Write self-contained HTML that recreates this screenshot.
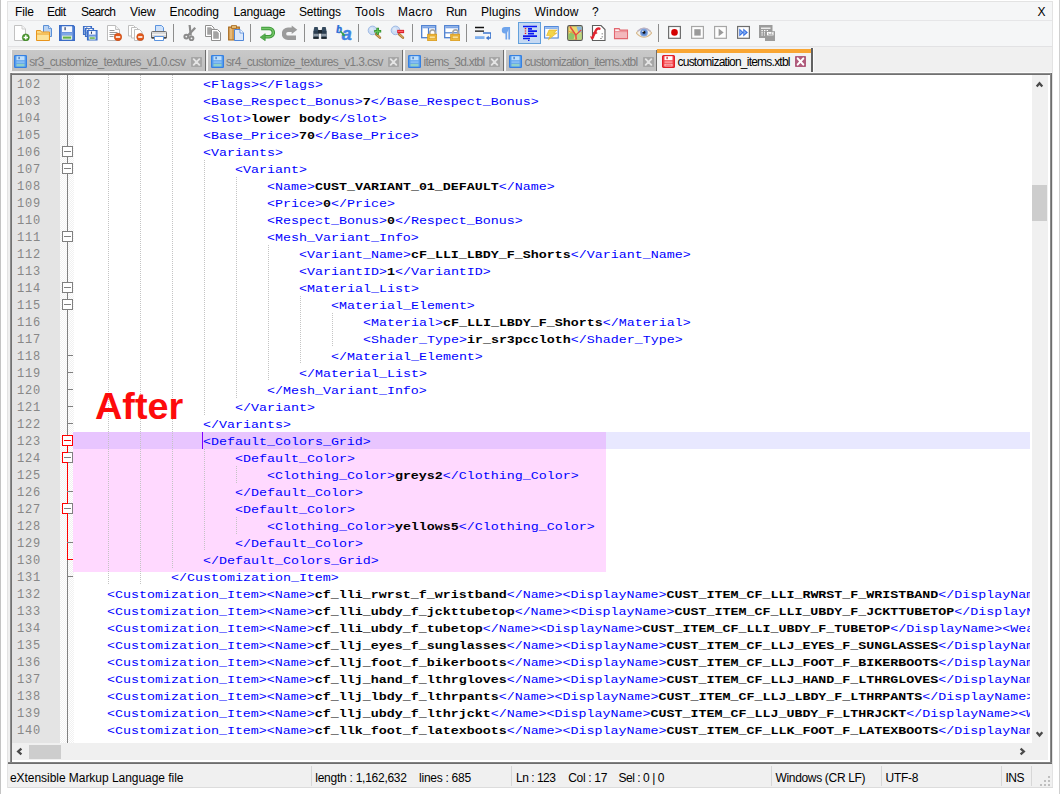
<!DOCTYPE html>
<html lang="en">
<head>
<meta charset="utf-8">
<title>customization_items.xtbl - Notepad++</title>
<style>
*{box-sizing:border-box;margin:0;padding:0}
html,body{width:1060px;height:794px;overflow:hidden;background:#fff}
body{position:relative;font-family:"Liberation Sans",sans-serif;font-size:12px;color:#000}
.abs,.n,.l,.g,.fb,.ft,.mi,.ic,.sep,.tab,.st,.sd{position:absolute}
/* window frame */
#edgeL{left:0;top:0;width:1px;height:794px;background:#c4c4c4}
#edgeR{left:1059px;top:0;width:1px;height:794px;background:#cfcfcf}
#win{left:7px;top:1px;width:1046px;height:787px;background:#f0f0f0;border:1px solid #e3e3e3}
#menubar{left:8px;top:2px;width:1044px;height:18px;background:#f5f6f7}
#menuline{left:8px;top:20px;width:1044px;height:1px;background:#e6e6e8}
#toolbar{left:8px;top:21px;width:1044px;height:25px;background:#f5f6f7}
#toolline{left:8px;top:46px;width:1044px;height:1px;background:#e2e2e4}
.mi{top:5px;height:15px;line-height:15px;font-size:12px;white-space:nowrap;color:#000}
.sep{top:24px;width:1px;height:18px;background:#8d8d8d}
.ic{top:25px;width:16px;height:16px}
/* tabs */
.tab{top:50px;height:21px;background:linear-gradient(#c9c9c9,#bebebe);border-right:1px solid #6e6e6e;box-shadow:-1px -1px 0 #f8f8f8}
.tab .tx{position:absolute;top:4.8px;height:14px;line-height:14px;font-size:12px;letter-spacing:-0.55px;color:#7e7e7e;white-space:nowrap}
.tab .fi{position:absolute;top:5px;width:13px;height:13px}
.tab .cl{position:absolute;top:7px;width:11px;height:10px}
.tab.act{top:48px;height:24px;background:#f2f2f2;border-right:2px solid #626262;box-shadow:1px 0 0 #fcfcfc}
.tab.act .tx{color:#000;top:6.8px}
.tab.act .fi{top:7px}
.tab.act .cl{top:8px;height:11px}
/* editor */
#edHi{left:10px;top:72px;width:1042px;height:1px;background:#fbfbfb}
#edTop{left:10px;top:73px;width:1042px;height:2px;background:linear-gradient(#9a9a9a,#636363)}
#edLeft{left:10px;top:73px;width:2px;height:690px;background:linear-gradient(90deg,#9a9a9a,#636363)}
#edRight{left:1050px;top:73px;width:2px;height:691px;background:linear-gradient(90deg,#9a9a9a,#5e5e5e)}
#edBot{left:8px;top:762px;width:1044px;height:2px;background:linear-gradient(#8a8a8a,#636363)}
#edBg{left:12px;top:75px;width:1038px;height:687px;background:#fff}
#lnm{left:12px;top:75px;width:48px;height:668px;background:#e4e4e4}
#fdm{left:60px;top:75px;width:14px;height:668px;background:repeating-conic-gradient(#fff 0 25%,#f1f1f1 0 50%) 0 0/2px 2px}
#fline{left:67px;top:75px;width:1px;height:668px;background:#808080}
#clip{left:12px;top:75px;width:1018px;height:668px;overflow:hidden}
#clip>div{position:absolute;left:-12px;top:-75px;width:1060px;height:794px}
.n{left:17px;width:26px;height:17px;line-height:17px;padding-top:2px;font-family:"Liberation Mono",monospace;font-size:12px;letter-spacing:0.8px;color:#878787;white-space:pre}
.l{height:17px;line-height:17px;padding-top:2px;margin-left:-0.6px;font-family:"Liberation Mono",monospace;font-size:11.2px;transform:scaleX(1.1905);transform-origin:0 0;color:#0000ff;white-space:pre}
.l b{color:#000;font-weight:bold}
.g{width:1px;background:repeating-linear-gradient(#c4c4c4 0 1px,transparent 1px 2px)}
.fb{left:62px;width:11px;height:11px;border:1px solid #808080;background:#fff}
.fb i{position:absolute;left:1px;top:4px;width:7px;height:1px;background:#808080}
.fb.r{border-color:#ff0000}.fb.r i{background:#ff0000}
.fb.h::before{content:"";box-sizing:border-box;position:absolute;left:-1px;top:-1px;width:6px;height:11px;border:1px solid #ff0000;border-right:0}
.ft{left:67px;width:6px;height:1px;background:#808080}
.ft.r{background:#ff0000}
#fline2{left:67px;top:446px;width:1px;height:114px;background:#ff0000}
#curline{left:74px;top:432px;width:956px;height:17px;background:#e8e8ff}
#pink{left:73px;top:432px;width:533px;height:140px;background:#ffd9ff}
#pink2{left:73px;top:432px;width:533px;height:17px;background:#e8c5ff}
#after{left:95px;top:385px;height:42px;line-height:42px;font-size:37.8px;font-weight:bold;color:#fd0b0b;white-space:nowrap;letter-spacing:0}
#caret{left:202px;top:432px;width:1px;height:17px;background:#8000ff}
/* scrollbars */
#vs{left:1032px;top:75px;width:16px;height:668px;background:#f0f0f0}
#vth{left:1032px;top:185px;width:15px;height:36px;background:#cdcdcd}
#hs{left:12px;top:743px;width:1036px;height:17px;background:#f0f0f0}
#hth{left:29px;top:745px;width:32px;height:14px;background:#cdcdcd}
#corner{left:1030px;top:743px;width:18px;height:17px;background:#f0f0f0}
/* status */
#status{left:8px;top:764px;width:1044px;height:23px;background:#f0f0f0}
#statline{left:8px;top:787px;width:1045px;height:1px;background:#dcdcdc}
.st{top:770px;height:16px;line-height:16px;font-size:12px;white-space:nowrap;color:#000}
.sd{top:766px;width:1px;height:20px;background:#d7d7d7}
</style>
</head>
<body>

<div class="abs" id="edgeL"></div><div class="abs" id="edgeR"></div>
<div class="abs" id="win"></div>
<div class="abs" id="menubar"></div><div class="abs" id="menuline"></div><div class="abs" id="toolbar"></div><div class="abs" id="toolline"></div>
<!-- menu -->
<div class="mi" style="left:15.0px;letter-spacing:-0.11px">File</div>
<div class="mi" style="left:47.0px;letter-spacing:-0.56px">Edit</div>
<div class="mi" style="left:81.0px;letter-spacing:-0.61px">Search</div>
<div class="mi" style="left:130.0px;letter-spacing:-0.1px">View</div>
<div class="mi" style="left:169.5px;letter-spacing:-0.08px">Encoding</div>
<div class="mi" style="left:233.5px;letter-spacing:-0.2px">Language</div>
<div class="mi" style="left:299.0px;letter-spacing:-0.19px">Settings</div>
<div class="mi" style="left:355.0px;letter-spacing:0.37px">Tools</div>
<div class="mi" style="left:398.0px;letter-spacing:0.29px">Macro</div>
<div class="mi" style="left:446.0px;letter-spacing:-0.51px">Run</div>
<div class="mi" style="left:481.0px;letter-spacing:0.02px">Plugins</div>
<div class="mi" style="left:534.5px;letter-spacing:0.26px">Window</div>
<div class="mi" style="left:592.0px;letter-spacing:0px">?</div>
<div class="mi" style="left:1037.5px;letter-spacing:0px">X</div>
<!-- toolbar -->
<div class="abs" style="left:518px;top:22px;width:23px;height:22px;background:#c5d9f3;border:1px solid #62a0dc"></div>
<svg class="ic" style="left:14px" viewBox="0 0 16 16" aria-label="new"><path d="M.5 .5h7.500l3.500 3.500v11.500h-11z" fill="#fff" stroke="#c2c2c2"/><path d="M8 .5v3.500h3.500" fill="#f4f4f4" stroke="#cdcdcd"/><circle cx="11.800" cy="12.400" r="3.500" fill="#4c9a2f" stroke="#3a7d22" stroke-width=".6"/><path d="M11.800 10.200v4.400M9.600 12.400h4.400" stroke="#fff" stroke-width="1.500"/></svg>
<svg class="ic" style="left:36px" viewBox="0 0 16 16" aria-label="open"><path d="M7.5 .5h5l3 3v8h-8z" fill="#b9d3f3" stroke="#5a8fd6"/><path d="M12.5 .5v3h3" fill="#dce9f9" stroke="#5a8fd6" stroke-width=".8"/><path d="M.5 5.5h4l1 1.5h8v8.5h-13z" fill="#fbd980" stroke="#e8941c"/><path d="M1 9h12" stroke="#f0a838" stroke-width="1"/><path d="M1.5 10h11v5h-11z" fill="#fce39b"/></svg>
<svg class="ic" style="left:59px" viewBox="0 0 16 16" aria-label="save"><path d="M.8 .8h13.4l1 1v13.400h-14.400z" fill="#6c95de" stroke="#3a6cc6" stroke-width="1.600"/><rect x="3" y="1.3" width="10" height="5.7" fill="#f7f9fd"/><rect x="5.5" y="2.2" width="1.2" height="3" fill="#2b3d66"/><rect x="3" y="8" width="10" height="2" fill="#7fa7e6"/><rect x="3" y="10.5" width="10" height="4.2" fill="#dfeeda"/><rect x="4" y="11.6" width="8" height="2" fill="#63b246"/></svg>
<svg class="ic" style="left:82px" viewBox="0 0 16 16" aria-label="saveall"><g transform="translate(1,1) scale(0.5625)"><path d="M.8 .8h14.4v14.4h-14.4z" fill="#6c95de" stroke="#3a6cc6" stroke-width="1.800"/><rect x="3" y="1.6" width="10" height="5.4" fill="#f7f9fd"/><rect x="6" y="2.4" width="1.6" height="3.4" fill="#2b3d66"/><rect x="3" y="10" width="10" height="4.6" fill="#dfeeda"/><rect x="4.2" y="11.2" width="7.6" height="2.2" fill="#63b246"/></g><g transform="translate(3,3) scale(0.5625)"><path d="M.8 .8h14.4v14.4h-14.4z" fill="#6c95de" stroke="#3a6cc6" stroke-width="1.800"/><rect x="3" y="1.6" width="10" height="5.4" fill="#f7f9fd"/><rect x="6" y="2.4" width="1.6" height="3.4" fill="#2b3d66"/><rect x="3" y="10" width="10" height="4.6" fill="#dfeeda"/><rect x="4.2" y="11.2" width="7.6" height="2.2" fill="#63b246"/></g><g transform="translate(5,5) scale(0.65625)"><path d="M.8 .8h14.4v14.4h-14.4z" fill="#6c95de" stroke="#3a6cc6" stroke-width="1.800"/><rect x="3" y="1.6" width="10" height="5.4" fill="#f7f9fd"/><rect x="6" y="2.4" width="1.6" height="3.4" fill="#2b3d66"/><rect x="3" y="10" width="10" height="4.6" fill="#dfeeda"/><rect x="4.2" y="11.2" width="7.6" height="2.2" fill="#63b246"/></g></svg>
<svg class="ic" style="left:106px" viewBox="0 0 16 16" aria-label="close"><path d="M1.5 .5h8l4 4v11h-12z" fill="#fff" stroke="#bcbcbc"/><path d="M9.5 .5v4h4" fill="#f0f0f0" stroke="#c4c4c4"/><path d="M3.5 5.5h5M3.5 7.5h8M3.5 9.5h6M3.5 11.5h4" stroke="#8f8f8f" stroke-width=".9"/><circle cx="12" cy="12" r="3.7" fill="#e2591c" stroke="#c2440f" stroke-width=".6"/><path d="M9.8 12h4.4" stroke="#fff" stroke-width="1.6"/></svg>
<svg class="ic" style="left:128px" viewBox="0 0 16 16" aria-label="closeall"><path d="M.5 .5h5l2.5 2.5v8h-7.5z" fill="#fff" stroke="#bfbfbf"/><path d="M3.5 2.5h5l2.500 2.500v8h-7.500z" fill="#fff" stroke="#bfbfbf"/><path d="M6.500 4.500h5l2.500 2.500v8.500h-7.500z" fill="#fff" stroke="#bfbfbf"/><circle cx="12.300" cy="12" r="3.600" fill="#e2591c" stroke="#c2440f" stroke-width=".6"/><path d="M10.200 12h4.200" stroke="#fff" stroke-width="1.600"/></svg>
<svg class="ic" style="left:151px" viewBox="0 0 16 16" aria-label="print"><path d="M4.500 .5h6l2 2v5h-8z" fill="#cfe2fa" stroke="#5b93de"/><path d="M1.500 6.500h13q1 0 1 1v5.500h-15v-5.500q0-1 1-1z" fill="#d8d8d8" stroke="#707070"/><path d="M1 9.500h14" stroke="#f4f4f4" stroke-width="1.200"/><path d="M.8 12.800h14.400" stroke="#3c3c3c" stroke-width="1.400"/><path d="M3.500 11.500h9v4h-9z" fill="#fff" stroke="#5b93de"/></svg>
<div class="sep" style="left:173px"></div>
<svg class="ic" style="left:182px" viewBox="0 0 16 16" aria-label="cut"><path d="M7.600 0l1.200 10.500" stroke="#8c8c8c" stroke-width="2.200" fill="none"/><path d="M13.200 2.800L5.500 11" stroke="#8c8c8c" stroke-width="2.300" fill="none"/><circle cx="4.300" cy="11.600" r="1.900" fill="none" stroke="#8c8c8c" stroke-width="2"/><circle cx="9.500" cy="13.300" r="1.900" fill="none" stroke="#8c8c8c" stroke-width="2"/></svg>
<svg class="ic" style="left:205px" viewBox="0 0 16 16" aria-label="copy"><path d="M.5 .5h6l2.500 2.500v8.500h-8.500z" fill="#fff" stroke="#8f8f8f"/><path d="M2.200 2.200h3.600l1.500 1.500v6.100h-5.100z" fill="#a3a3a3"/><path d="M6.500 4.500h6l3 3v8h-9z" fill="#fff" stroke="#8f8f8f"/><path d="M8.200 6.200h3.800l1.800 1.800v5.800h-5.600z" fill="#a3a3a3"/></svg>
<svg class="ic" style="left:228px" viewBox="0 0 16 16" aria-label="paste"><path d="M.7 2h10.600v13h-10.600z" fill="#d39a4e" stroke="#a86a20" stroke-width="1.200"/><path d="M1.600 3h2.600v11.200h-2.600z" fill="#e6b877"/><path d="M3.500 .6h5v2.800h-5z" fill="#e9c27a" stroke="#a86a20" stroke-width=".9"/><path d="M6.500 4.500h5.500l3.500 3.500v7.500h-9z" fill="#dbe8fb" stroke="#4f86d8"/><path d="M12 4.500v3.500h3.500" fill="#fff" stroke="#4f86d8" stroke-width=".8"/></svg>
<div class="sep" style="left:250px"></div>
<svg class="ic" style="left:259px" viewBox="0 0 16 16" aria-label="undo"><path d="M2.200 3.500h8a4.150 4.150 0 0 1 0 8.300H6" fill="none" stroke="#3f9a3b" stroke-width="3.400"/><path d="M2.600 3.500h7.600a4.150 4.150 0 0 1 0 8.300H6" fill="none" stroke="#74c568" stroke-width="1.500"/><path d="M1.200 12.200l5-3.500v7z" fill="#55ae4c" stroke="#3f9a3b" stroke-width=".7"/></svg>
<svg class="ic" style="left:282px" viewBox="0 0 16 16" aria-label="redo"><path d="M14 12.800H6a4.050 4.050 0 0 1 0-8.100H10.500" fill="none" stroke="#9b9b9b" stroke-width="4.400"/><path d="M15.300 4.800l-5.600-4.300v8.600z" fill="#9b9b9b"/></svg>
<div class="sep" style="left:304px"></div>
<svg class="ic" style="left:312px" viewBox="0 0 16 16" aria-label="find"><path d="M1.300 6h5.400v7.400h-5.400z" fill="#2c3e50"/><path d="M9.300 6h5.400v7.400h-5.400z" fill="#2c3e50"/><path d="M2.300 2h3.400l.8 4h-5z" fill="#34495e"/><path d="M10.300 2h3.400l.8 4h-5z" fill="#34495e"/><rect x="6" y="5" width="4" height="3.600" fill="#1e2833"/><rect x="1.300" y="8.800" width="5.400" height="2.600" fill="#8f9aa5"/><rect x="9.300" y="8.800" width="5.400" height="2.600" fill="#8f9aa5"/><rect x="1.300" y="12.400" width="5.400" height="1.400" fill="#10161c"/><rect x="9.300" y="12.400" width="5.400" height="1.400" fill="#10161c"/></svg>
<svg class="ic" style="left:336px" viewBox="0 0 16 16" aria-label="replace"><text x=".2" y="7.600" font-family="Liberation Serif,serif" font-weight="bold" font-style="italic" font-size="11.500" fill="#2d6fd6" stroke="#2d6fd6" stroke-width=".4">b</text><text x="5.800" y="15.300" font-family="Liberation Sans,sans-serif" font-weight="bold" font-style="italic" font-size="18" fill="#3f84e4" stroke="#3f84e4" stroke-width=".5">a</text><path d="M4.500 6.200l3 3.300" stroke="#35a04a" stroke-width="1.500"/><path d="M9 11.200l-3.700-1 2.700-2.400z" fill="#35a04a"/></svg>
<div class="sep" style="left:358px"></div>
<svg class="ic" style="left:367px" viewBox="0 0 16 16" aria-label="zoomin"><circle cx="5.500" cy="5.400" r="4.300" fill="#cbdcf4" stroke="#9db9e5" stroke-width="1"/><circle cx="4.600" cy="4.400" r="1.800" fill="#dde8f8"/><path d="M9.200 9.200l3.700 3.400" stroke="#a8742e" stroke-width="2.600" stroke-linecap="round"/><path d="M9.500 9.400l3.300 3" stroke="#dba860" stroke-width="1.100" stroke-linecap="round"/><path d="M10.700 2.800v7M7.200 6.300h7" stroke="#2f8f2c" stroke-width="2.600"/><path d="M10.700 3.600v5.400M8 6.300h5.400" stroke="#62c254" stroke-width="1.200"/></svg>
<svg class="ic" style="left:390px" viewBox="0 0 16 16" aria-label="zoomout"><circle cx="5.500" cy="5.400" r="4.300" fill="#cbdcf4" stroke="#9db9e5" stroke-width="1"/><circle cx="4.600" cy="4.400" r="1.800" fill="#dde8f8"/><path d="M9.200 9.200l3.700 3.400" stroke="#a8742e" stroke-width="2.600" stroke-linecap="round"/><path d="M9.500 9.400l3.300 3" stroke="#dba860" stroke-width="1.100" stroke-linecap="round"/><path d="M7.200 6.500h6.900" stroke="#dc1f2b" stroke-width="3.300"/><path d="M8 6.400h5.300" stroke="#ff6a6e" stroke-width="1.100"/></svg>
<div class="sep" style="left:412px"></div>
<svg class="ic" style="left:421px" viewBox="0 0 16 16" aria-label="syncv"><rect x=".7" y=".7" width="14" height="12" fill="#fff" stroke="#4c7fd0" stroke-width="1.300"/><rect x="1.300" y="1.300" width="12.800" height="2" fill="#7ea6e6"/><path d="M7.500 3v10" stroke="#4c7fd0" stroke-width="1.200"/><path d="M8.800 9.500v-2a2.700 2.700 0 0 1 5.400 0v2" fill="none" stroke="#a7a7a7" stroke-width="1.700"/><rect x="6.700" y="9.300" width="9" height="6.400" fill="#f0bc3e" stroke="#d99a1c" stroke-width=".9"/><rect x="8.200" y="11" width="6" height="2.700" fill="#fbe29a" stroke="#d99a1c" stroke-width=".6"/></svg>
<svg class="ic" style="left:444px" viewBox="0 0 16 16" aria-label="synch"><rect x=".7" y=".7" width="14" height="12" fill="#fff" stroke="#4c7fd0" stroke-width="1.300"/><rect x="1.300" y="1.300" width="12.800" height="2" fill="#7ea6e6"/><path d="M1 7.800h13.500" stroke="#4c7fd0" stroke-width="1.200"/><path d="M8.800 9.500v-2a2.700 2.700 0 0 1 5.400 0v2" fill="none" stroke="#a7a7a7" stroke-width="1.700"/><rect x="6.700" y="9.300" width="9" height="6.400" fill="#f0bc3e" stroke="#d99a1c" stroke-width=".9"/><rect x="8.200" y="11" width="6" height="2.700" fill="#fbe29a" stroke="#d99a1c" stroke-width=".6"/></svg>
<div class="sep" style="left:466px"></div>
<svg class="ic" style="left:475px" viewBox="0 0 16 16" aria-label="wrap"><path d="M0 2.500h9M0 6.200h9" stroke="#111" stroke-width="1.300"/><path d="M8 8h7.800v5H12" fill="none" stroke="#3f78cf" stroke-width="1.300"/><path d="M10.800 13l3-2.300v4.600z" fill="#3f78cf"/><rect x="0" y="11.200" width="9.500" height="2.800" fill="#7fb0ee"/></svg>
<svg class="ic" style="left:497px" viewBox="0 0 16 16" aria-label="pilcrow"><path d="M9.300 2v12.500M12.200 2v12.500" stroke="#6ea4ec" stroke-width="1.700"/><path d="M13 2H8a3.200 3.200 0 0 0 0 6.400h1.600z" fill="#6ea4ec"/></svg>
<svg class="ic" style="left:523px" viewBox="0 0 16 16" aria-label="indent"><path d="M0 1.500h14M5 3.800h4M5 6.200h9M5 8.700h6M0 11.200h14M0 13.500h7" stroke="#0b17f0" stroke-width="1.700"/><path d="M2.500 3v7.500" stroke="#f01818" stroke-width="1.400" stroke-dasharray="1.200 1.200"/><path d="M5 15.300h1.500" stroke="#0b17f0" stroke-width="1.200"/></svg>
<svg class="ic" style="left:544px" viewBox="0 0 16 16" aria-label="udl"><rect x=".6" y="1.600" width="13.600" height="11.400" fill="#fff" stroke="#4c84d8" stroke-width="1.100"/><rect x="1.200" y="2.200" width="12.400" height="1.800" fill="#8bb4ee"/><path d="M5 5h8l-3.200 3h3L4.500 14.600l1.800-4H2.600z" fill="#f3d548" stroke="#e3b32a" stroke-width=".7"/></svg>
<svg class="ic" style="left:567px" viewBox="0 0 16 16" aria-label="map"><rect x=".7" y=".7" width="14.600" height="14.600" rx="1.600" fill="#ead96e" stroke="#555" stroke-width="1.200"/><path d="M1.400 9.500l3.600-3.500 3 3.500-1.500 5.100h-5.100z" fill="#8fc46a"/><path d="M9.500 1.400h5.100v5.600l-3.100 1z" fill="#86b7e0"/><path d="M9.500 10l5.100-1.800v6.400h-5.600z" fill="#b5d886"/><path d="M3 1.500l5.800 8.500.4 4.600" fill="none" stroke="#e24a40" stroke-width="1.500"/><path d="M8.800 10l5.400-5" stroke="#e24a40" stroke-width="1.100"/><path d="M1.400 6l5.400 2.600" stroke="#f0a03a" stroke-width="1"/></svg>
<svg class="ic" style="left:590px" viewBox="0 0 16 16" aria-label="func"><path d="M2.500 .5h8.500l4 4v11h-12.500z" fill="#fff" stroke="#5e5e5e" stroke-width="1.100"/><path d="M12.200 8v5.500h-3" fill="none" stroke="#8a8a8a" stroke-width="1" stroke-dasharray="1.500 1.500"/><path d="M9.400 3.700q-2.300-.9-3.400 1.600L2.600 12.600" fill="none" stroke="#e02430" stroke-width="2.400" stroke-linecap="round"/><path d="M3 8h4.200" stroke="#e02430" stroke-width="1.500"/><path d="M-.2 11.200l2 3.600 2.600-2.400z" fill="#e02430"/></svg>
<svg class="ic" style="left:613px" viewBox="0 0 16 16" aria-label="folder"><path d="M1.500 3.600h4.600l1 1.500h7.400v8.500h-13z" fill="#f8d3d5" stroke="#e2666f" stroke-width="1.100"/><path d="M2 6.800h12" stroke="#e2666f" stroke-width=".8"/><path d="M2.100 7.300h11.800v5.700h-11.800z" fill="#f2aeb3" opacity=".75"/><path d="M2.600 5.300h3" stroke="#fff" stroke-width=".9"/></svg>
<svg class="ic" style="left:636px" viewBox="0 0 16 16" aria-label="eye"><path d="M.3 8q7.700-9.500 15.400 0q-7.700 8.600-15.400 0z" fill="#f4f1ea" stroke="#d8b98c" stroke-width="1.100"/><path d="M1.500 6.300q6.500-6 13 0" fill="none" stroke="#b9b3c9" stroke-width="1.300"/><circle cx="8" cy="7.600" r="3.900" fill="#7ea3de"/><circle cx="8" cy="7.600" r="2.700" fill="#5b86cf"/><circle cx="8" cy="7.400" r="1.400" fill="#111"/><circle cx="6.900" cy="6.300" r=".8" fill="#fff"/></svg>
<div class="sep" style="left:658px"></div>
<svg class="ic" style="left:668px" viewBox="0 0 16 16" aria-label="rec"><rect x=".6" y="1.500" width="11.800" height="11.800" fill="#fdfdfd" stroke="#6e6e6e" stroke-width="1.200"/><circle cx="6.500" cy="7.400" r="3.300" fill="#d40000"/></svg>
<svg class="ic" style="left:691px" viewBox="0 0 16 16" aria-label="stop"><rect x=".6" y="1.500" width="11.800" height="11.800" fill="#fdfdfd" stroke="#a6a6a6" stroke-width="1.200"/><rect x="3.300" y="4.200" width="6.400" height="6.400" fill="#9a9a9a"/></svg>
<svg class="ic" style="left:714px" viewBox="0 0 16 16" aria-label="play"><rect x=".6" y="1.500" width="11.800" height="11.800" fill="#fdfdfd" stroke="#a6a6a6" stroke-width="1.200"/><path d="M4.600 3.500v7.800l5-3.900z" fill="#9a9a9a"/></svg>
<svg class="ic" style="left:737px" viewBox="0 0 16 16" aria-label="playm"><rect x=".6" y="1.500" width="11.800" height="11.800" fill="#fdfdfd" stroke="#6e6e6e" stroke-width="1.200"/><path d="M2.300 3.400v8l4.400-4z" fill="#2f6ae0"/><path d="M6.300 3.400v8l4.600-4z" fill="#2f6ae0"/><path d="M3 5.200v4.400l2.300-2.200zM7 5.200v4.400l2.400-2.200z" fill="#7eaaf0"/></svg>
<svg class="ic" style="left:759px" viewBox="0 0 16 16" aria-label="savem"><rect x="0" y="0" width="13.500" height="13" fill="#9c9c9c"/><path d="M2 3.200h9.500" stroke="#fff" stroke-width="1.200"/><path d="M2.400 5.600h1.400M5 5.600h1.400M2.400 7.800h1.400M5 7.800h1.400M2.400 10h1.400M5 10h1.400M7.600 5.600h1.400" stroke="#fff" stroke-width="1.200"/><rect x="6" y="6.200" width="10" height="9.800" fill="#9c9c9c"/><rect x="8" y="7" width="6.500" height="3.400" fill="#fff"/><path d="M9.800 7.800v1.800h2M13.600 7.800h-1.400v1.800h1.400" stroke="#9c9c9c" stroke-width=".8" fill="none"/></svg>
<!-- tabs -->
<div class="tab" style="left:12px;width:194px">
<svg class="fi" style="left:2px" viewBox="0 0 13 13"><rect x=".6" y=".6" width="11.800" height="11.800" rx=".6" fill="#5fa3ee" stroke="#3580e2" stroke-width="1.200"/><rect x="2.500" y="1.200" width="8" height="4" fill="#bfdffb"/><rect x="4.500" y="1.800" width="1.200" height="2.400" fill="#3c6fb8"/><rect x="2.500" y="6.300" width="8" height="1.600" fill="#8cc0f5"/><rect x="2.500" y="8.800" width="8" height="2.600" fill="#8fd0c8"/></svg>
<div class="tx" style="left:17.2px;letter-spacing:-0.69px">sr3_customize_textures_v1.0.csv</div>
<svg class="cl" style="left:179px" viewBox="0 0 11 10" preserveAspectRatio="none"><rect x="0" y="0" width="11" height="10" rx=".8" fill="#a6a6a6"/><path d="M2.700 2.200l5.600 5.600M8.300 2.200l-5.600 5.600" stroke="#e4e4e4" stroke-width="1.900" stroke-linecap="round"/></svg>
</div>
<div class="tab" style="left:208px;width:195px">
<svg class="fi" style="left:3px" viewBox="0 0 13 13"><rect x=".6" y=".6" width="11.800" height="11.800" rx=".6" fill="#5fa3ee" stroke="#3580e2" stroke-width="1.200"/><rect x="2.500" y="1.200" width="8" height="4" fill="#bfdffb"/><rect x="4.500" y="1.800" width="1.200" height="2.400" fill="#3c6fb8"/><rect x="2.500" y="6.300" width="8" height="1.600" fill="#8cc0f5"/><rect x="2.500" y="8.800" width="8" height="2.600" fill="#8fd0c8"/></svg>
<div class="tx" style="left:18.0px;letter-spacing:-0.66px">sr4_customize_textures_v1.3.csv</div>
<svg class="cl" style="left:180px" viewBox="0 0 11 10" preserveAspectRatio="none"><rect x="0" y="0" width="11" height="10" rx=".8" fill="#a6a6a6"/><path d="M2.700 2.200l5.600 5.600M8.300 2.200l-5.600 5.600" stroke="#e4e4e4" stroke-width="1.900" stroke-linecap="round"/></svg>
</div>
<div class="tab" style="left:405px;width:99px">
<svg class="fi" style="left:3px" viewBox="0 0 13 13"><rect x=".6" y=".6" width="11.800" height="11.800" rx=".6" fill="#5fa3ee" stroke="#3580e2" stroke-width="1.200"/><rect x="2.500" y="1.200" width="8" height="4" fill="#bfdffb"/><rect x="4.500" y="1.800" width="1.200" height="2.400" fill="#3c6fb8"/><rect x="2.500" y="6.300" width="8" height="1.600" fill="#8cc0f5"/><rect x="2.500" y="8.800" width="8" height="2.600" fill="#8fd0c8"/></svg>
<div class="tx" style="left:18.5px;letter-spacing:-0.76px">items_3d.xtbl</div>
<svg class="cl" style="left:84px" viewBox="0 0 11 10" preserveAspectRatio="none"><rect x="0" y="0" width="11" height="10" rx=".8" fill="#a6a6a6"/><path d="M2.700 2.200l5.600 5.600M8.300 2.200l-5.600 5.600" stroke="#e4e4e4" stroke-width="1.900" stroke-linecap="round"/></svg>
</div>
<div class="tab" style="left:506px;width:151px">
<svg class="fi" style="left:3px" viewBox="0 0 13 13"><rect x=".6" y=".6" width="11.800" height="11.800" rx=".6" fill="#5fa3ee" stroke="#3580e2" stroke-width="1.200"/><rect x="2.500" y="1.200" width="8" height="4" fill="#bfdffb"/><rect x="4.500" y="1.800" width="1.200" height="2.400" fill="#3c6fb8"/><rect x="2.500" y="6.300" width="8" height="1.600" fill="#8cc0f5"/><rect x="2.500" y="8.800" width="8" height="2.600" fill="#8fd0c8"/></svg>
<div class="tx" style="left:18.6px;letter-spacing:-0.75px">customization_items.xtbl</div>
<svg class="cl" style="left:136.5px" viewBox="0 0 11 10" preserveAspectRatio="none"><rect x="0" y="0" width="11" height="10" rx=".8" fill="#a6a6a6"/><path d="M2.700 2.200l5.600 5.600M8.300 2.200l-5.600 5.600" stroke="#e4e4e4" stroke-width="1.900" stroke-linecap="round"/></svg>
</div>
<div class="tab act" style="left:657px;width:156px">
<div style="position:absolute;left:0;top:1px;right:0;height:4px;background:#f9a633"></div>
<svg class="fi" style="left:5px" viewBox="0 0 13 13"><rect x=".6" y=".6" width="11.800" height="11.800" rx="1" fill="#f4464c" stroke="#e01f28" stroke-width="1.200"/><rect x="2.500" y="1.200" width="8" height="4" fill="#fff"/><rect x="4.500" y="1.800" width="1.200" height="2.400" fill="#d8202a"/><rect x="2.500" y="6.300" width="8" height="1.600" fill="#ff9a9e"/><rect x="2.500" y="8.800" width="8" height="2.600" fill="#ffd9da"/><rect x="3.300" y="9.500" width="6.400" height="1.200" fill="#f0565c"/></svg>
<div class="tx" style="left:20.5px;letter-spacing:-0.77px">customization_items.xtbl</div>
<svg class="cl" style="left:138px" viewBox="0 0 11 10" preserveAspectRatio="none"><rect x="0" y="0" width="11" height="10" rx=".8" fill="#b05c7c"/><path d="M2.700 2.200l5.600 5.600M8.300 2.200l-5.600 5.600" stroke="#fff" stroke-width="1.900" stroke-linecap="round"/></svg>
</div>
<!-- editor -->
<div class="abs" id="edBg"></div>
<div class="abs" id="lnm"></div><div class="abs" id="fdm"></div><div class="abs" id="fline"></div><div class="abs" id="fline2"></div>
<div class="abs" id="clip"><div>
<div class="abs" id="curline"></div>
<div class="abs" id="pink"></div><div class="abs" id="pink2"></div>
<!-- line numbers -->
<div class="n" style="top:75px">102</div>
<div class="n" style="top:92px">103</div>
<div class="n" style="top:109px">104</div>
<div class="n" style="top:126px">105</div>
<div class="n" style="top:143px">106</div>
<div class="n" style="top:160px">107</div>
<div class="n" style="top:177px">108</div>
<div class="n" style="top:194px">109</div>
<div class="n" style="top:211px">110</div>
<div class="n" style="top:228px">111</div>
<div class="n" style="top:245px">112</div>
<div class="n" style="top:262px">113</div>
<div class="n" style="top:279px">114</div>
<div class="n" style="top:296px">115</div>
<div class="n" style="top:313px">116</div>
<div class="n" style="top:330px">117</div>
<div class="n" style="top:347px">118</div>
<div class="n" style="top:364px">119</div>
<div class="n" style="top:381px">120</div>
<div class="n" style="top:398px">121</div>
<div class="n" style="top:415px">122</div>
<div class="n" style="top:432px">123</div>
<div class="n" style="top:449px">124</div>
<div class="n" style="top:466px">125</div>
<div class="n" style="top:483px">126</div>
<div class="n" style="top:500px">127</div>
<div class="n" style="top:517px">128</div>
<div class="n" style="top:534px">129</div>
<div class="n" style="top:551px">130</div>
<div class="n" style="top:568px">131</div>
<div class="n" style="top:585px">132</div>
<div class="n" style="top:602px">133</div>
<div class="n" style="top:619px">134</div>
<div class="n" style="top:636px">135</div>
<div class="n" style="top:653px">136</div>
<div class="n" style="top:670px">137</div>
<div class="n" style="top:687px">138</div>
<div class="n" style="top:704px">139</div>
<div class="n" style="top:721px">140</div>
<!-- indent guides -->
<div class="g" style="left:108px;top:75px;height:510px"></div>
<div class="g" style="left:140px;top:75px;height:510px"></div>
<div class="g" style="left:172px;top:75px;height:493px"></div>
<div class="g" style="left:204px;top:160px;height:255px"></div>
<div class="g" style="left:204px;top:449px;height:102px"></div>
<div class="g" style="left:236px;top:177px;height:221px"></div>
<div class="g" style="left:236px;top:466px;height:17px"></div>
<div class="g" style="left:236px;top:517px;height:17px"></div>
<div class="g" style="left:268px;top:245px;height:136px"></div>
<div class="g" style="left:300px;top:296px;height:68px"></div>
<div class="g" style="left:332px;top:313px;height:34px"></div>
<!-- code -->
<div class="l" style="top:75px;left:204px">&lt;Flags&gt;&lt;/Flags&gt;</div>
<div class="l" style="top:92px;left:204px">&lt;Base_Respect_Bonus&gt;<b>7</b>&lt;/Base_Respect_Bonus&gt;</div>
<div class="l" style="top:109px;left:204px">&lt;Slot&gt;<b>lower body</b>&lt;/Slot&gt;</div>
<div class="l" style="top:126px;left:204px">&lt;Base_Price&gt;<b>70</b>&lt;/Base_Price&gt;</div>
<div class="l" style="top:143px;left:204px">&lt;Variants&gt;</div>
<div class="l" style="top:160px;left:236px">&lt;Variant&gt;</div>
<div class="l" style="top:177px;left:268px">&lt;Name&gt;<b>CUST_VARIANT_01_DEFAULT</b>&lt;/Name&gt;</div>
<div class="l" style="top:194px;left:268px">&lt;Price&gt;<b>0</b>&lt;/Price&gt;</div>
<div class="l" style="top:211px;left:268px">&lt;Respect_Bonus&gt;<b>0</b>&lt;/Respect_Bonus&gt;</div>
<div class="l" style="top:228px;left:268px">&lt;Mesh_Variant_Info&gt;</div>
<div class="l" style="top:245px;left:300px">&lt;Variant_Name&gt;<b>cF_LLI_LBDY_F_Shorts</b>&lt;/Variant_Name&gt;</div>
<div class="l" style="top:262px;left:300px">&lt;VariantID&gt;<b>1</b>&lt;/VariantID&gt;</div>
<div class="l" style="top:279px;left:300px">&lt;Material_List&gt;</div>
<div class="l" style="top:296px;left:332px">&lt;Material_Element&gt;</div>
<div class="l" style="top:313px;left:364px">&lt;Material&gt;<b>cF_LLI_LBDY_F_Shorts</b>&lt;/Material&gt;</div>
<div class="l" style="top:330px;left:364px">&lt;Shader_Type&gt;<b>ir_sr3pccloth</b>&lt;/Shader_Type&gt;</div>
<div class="l" style="top:347px;left:332px">&lt;/Material_Element&gt;</div>
<div class="l" style="top:364px;left:300px">&lt;/Material_List&gt;</div>
<div class="l" style="top:381px;left:268px">&lt;/Mesh_Variant_Info&gt;</div>
<div class="l" style="top:398px;left:236px">&lt;/Variant&gt;</div>
<div class="l" style="top:415px;left:204px">&lt;/Variants&gt;</div>
<div class="l" style="top:432px;left:204px">&lt;Default_Colors_Grid&gt;</div>
<div class="l" style="top:449px;left:236px">&lt;Default_Color&gt;</div>
<div class="l" style="top:466px;left:268px">&lt;Clothing_Color&gt;<b>greys2</b>&lt;/Clothing_Color&gt;</div>
<div class="l" style="top:483px;left:236px">&lt;/Default_Color&gt;</div>
<div class="l" style="top:500px;left:236px">&lt;Default_Color&gt;</div>
<div class="l" style="top:517px;left:268px">&lt;Clothing_Color&gt;<b>yellows5</b>&lt;/Clothing_Color&gt;</div>
<div class="l" style="top:534px;left:236px">&lt;/Default_Color&gt;</div>
<div class="l" style="top:551px;left:204px">&lt;/Default_Colors_Grid&gt;</div>
<div class="l" style="top:568px;left:172px">&lt;/Customization_Item&gt;</div>
<div class="l" style="top:585px;left:108px">&lt;Customization_Item&gt;&lt;Name&gt;<b>cf_lli_rwrst_f_wristband</b>&lt;/Name&gt;&lt;DisplayName&gt;<b>CUST_ITEM_CF_LLI_RWRST_F_WRISTBAND</b>&lt;/DisplayName&gt;&lt;Wear_Options&gt;</div>
<div class="l" style="top:602px;left:108px">&lt;Customization_Item&gt;&lt;Name&gt;<b>cf_lli_ubdy_f_jckttubetop</b>&lt;/Name&gt;&lt;DisplayName&gt;<b>CUST_ITEM_CF_LLI_UBDY_F_JCKTTUBETOP</b>&lt;/DisplayName&gt;&lt;Wear_Options&gt;</div>
<div class="l" style="top:619px;left:108px">&lt;Customization_Item&gt;&lt;Name&gt;<b>cf_lli_ubdy_f_tubetop</b>&lt;/Name&gt;&lt;DisplayName&gt;<b>CUST_ITEM_CF_LLI_UBDY_F_TUBETOP</b>&lt;/DisplayName&gt;&lt;Wear_Options&gt;</div>
<div class="l" style="top:636px;left:108px">&lt;Customization_Item&gt;&lt;Name&gt;<b>cf_llj_eyes_f_sunglasses</b>&lt;/Name&gt;&lt;DisplayName&gt;<b>CUST_ITEM_CF_LLJ_EYES_F_SUNGLASSES</b>&lt;/DisplayName&gt;&lt;Wear_Options&gt;</div>
<div class="l" style="top:653px;left:108px">&lt;Customization_Item&gt;&lt;Name&gt;<b>cf_llj_foot_f_bikerboots</b>&lt;/Name&gt;&lt;DisplayName&gt;<b>CUST_ITEM_CF_LLJ_FOOT_F_BIKERBOOTS</b>&lt;/DisplayName&gt;&lt;Wear_Options&gt;</div>
<div class="l" style="top:670px;left:108px">&lt;Customization_Item&gt;&lt;Name&gt;<b>cf_llj_hand_f_lthrgloves</b>&lt;/Name&gt;&lt;DisplayName&gt;<b>CUST_ITEM_CF_LLJ_HAND_F_LTHRGLOVES</b>&lt;/DisplayName&gt;&lt;Wear_Options&gt;</div>
<div class="l" style="top:687px;left:108px">&lt;Customization_Item&gt;&lt;Name&gt;<b>cf_llj_lbdy_f_lthrpants</b>&lt;/Name&gt;&lt;DisplayName&gt;<b>CUST_ITEM_CF_LLJ_LBDY_F_LTHRPANTS</b>&lt;/DisplayName&gt;&lt;Wear_Options&gt;</div>
<div class="l" style="top:704px;left:108px">&lt;Customization_Item&gt;&lt;Name&gt;<b>cf_llj_ubdy_f_lthrjckt</b>&lt;/Name&gt;&lt;DisplayName&gt;<b>CUST_ITEM_CF_LLJ_UBDY_F_LTHRJCKT</b>&lt;/DisplayName&gt;&lt;Wear_Options&gt;</div>
<div class="l" style="top:721px;left:108px">&lt;Customization_Item&gt;&lt;Name&gt;<b>cf_llk_foot_f_latexboots</b>&lt;/Name&gt;&lt;DisplayName&gt;<b>CUST_ITEM_CF_LLK_FOOT_F_LATEXBOOTS</b>&lt;/DisplayName&gt;&lt;Wear_Options&gt;</div>
<div class="l" style="top:738px;left:108px">&lt;Customization_Item&gt;&lt;Name&gt;<b>cf_llk_lbdy_f_latexpants</b>&lt;/Name&gt;&lt;DisplayName&gt;<b>CUST_ITEM_CF_LLK_LBDY_F_LATEXPANTS</b>&lt;/DisplayName&gt;&lt;Wear_Options&gt;</div>
<!-- folds -->
<div class="fb" style="top:146px"><i></i></div>
<div class="fb" style="top:163px"><i></i></div>
<div class="fb" style="top:231px"><i></i></div>
<div class="fb" style="top:282px"><i></i></div>
<div class="fb" style="top:299px"><i></i></div>
<div class="ft" style="top:355px"></div>
<div class="ft" style="top:372px"></div>
<div class="ft" style="top:389px"></div>
<div class="ft" style="top:406px"></div>
<div class="ft" style="top:423px"></div>
<div class="fb r" style="top:435px"><i></i></div>
<div class="fb h" style="top:452px"><i></i></div>
<div class="ft" style="top:491px"></div>
<div class="fb h" style="top:503px"><i></i></div>
<div class="ft" style="top:542px"></div>
<div class="ft r" style="top:559px"></div>
<div class="ft" style="top:576px"></div>
<div class="abs" id="caret"></div>
<div class="abs" id="after">After</div>
</div></div>
<div class="abs" id="edHi"></div><div class="abs" id="edTop"></div><div class="abs" id="edLeft"></div><div class="abs" id="edRight"></div><div class="abs" id="edBot"></div>
<!-- scrollbars -->
<div class="abs" id="vs"></div><div class="abs" id="vth"></div><div class="abs" id="hs"></div><div class="abs" id="hth"></div>
<svg class="abs" style="left:1035px;top:80.5px" width="9" height="7" viewBox="0 0 9 7"><path d="M1.700 5.400L4.500 2.200 7.300 5.400" fill="none" stroke="#4a4a4a" stroke-width="2.300"/></svg>
<svg class="abs" style="left:1035px;top:731px" width="9" height="7" viewBox="0 0 9 7"><path d="M1.700 1.300L4.500 4.500 7.300 1.300" fill="none" stroke="#4a4a4a" stroke-width="2.300"/></svg>
<svg class="abs" style="left:16.3px;top:747px" width="7" height="9" viewBox="0 0 7 9"><path d="M5.400 1.700L2.200 4.500 5.400 7.300" fill="none" stroke="#4a4a4a" stroke-width="2.300"/></svg>
<svg class="abs" style="left:1019.3px;top:747px" width="7" height="9" viewBox="0 0 7 9"><path d="M1.600 1.700L4.800 4.500 1.600 7.300" fill="none" stroke="#4a4a4a" stroke-width="2.300"/></svg>
<!-- status bar -->
<div class="abs" id="status"></div><div class="abs" id="statline"></div>
<div class="st" style="left:9.9px;letter-spacing:-0.04px">eXtensible Markup Language file</div>
<div class="st" style="left:315.3px;letter-spacing:-0.26px">length : 1,162,632</div>
<div class="st" style="left:419.1px;letter-spacing:-0.27px">lines : 685</div>
<div class="st" style="left:516.1px;letter-spacing:-0.5px">Ln : 123</div>
<div class="st" style="left:568.2px;letter-spacing:-0.32px">Col : 17</div>
<div class="st" style="left:618.4px;letter-spacing:-0.44px">Sel : 0 | 0</div>
<div class="st" style="left:775.5px;letter-spacing:-0.33px">Windows (CR LF)</div>
<div class="st" style="left:885.5px;letter-spacing:-0.25px">UTF-8</div>
<div class="st" style="left:1005.5px;letter-spacing:-0.51px">INS</div>
<div class="sd" style="left:311px"></div>
<div class="sd" style="left:511px"></div>
<div class="sd" style="left:771px"></div>
<div class="sd" style="left:881px"></div>
<div class="sd" style="left:1001px"></div>
<div class="sd" style="left:1031px"></div>
<svg class="abs" style="left:1039px;top:775px" width="12" height="12" viewBox="0 0 12 12"><path d="M9 1h2v2h-2zM9 5h2v2h-2zM9 9h2v2h-2zM5 5h2v2h-2zM5 9h2v2h-2zM1 9h2v2h-2z" fill="#bfbfbf"/></svg>
</body>
</html>
